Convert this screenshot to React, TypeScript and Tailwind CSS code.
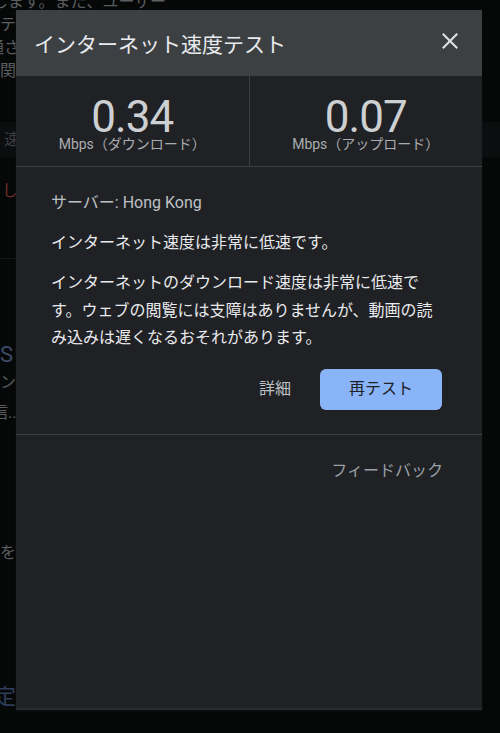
import React from "react";

const F = { fontFamily: "Roboto, 'Noto Sans CJK JP', sans-serif" };

function Background() {
  return (
    <div className="flex flex-col text-[16px] text-[#5b5e61] whitespace-nowrap" style={F}>
      <div className="-mt-[10px] h-[23px] leading-[23px] -ml-[8px] flex items-center">
        <span>します。また、ユーザー</span>
      </div>
      <div className="h-[23px] leading-[23px] ml-0">テスト</div>
      <div className="h-[23px] leading-[23px] -ml-[12px]">通される</div>
      <div className="h-[23px] leading-[23px] ml-0">関する</div>
      <div className="mt-[40px] h-[35px] bg-[#0c0d0e] flex items-center pl-[4px] text-[#3d3f42]">速度</div>
      <div className="mt-[24px] h-[20px] leading-[20px] pl-[2px] text-[#6a2f29]">しっかり</div>
      <div className="mt-[57px] h-px w-[40px] bg-[#161719]"></div>
      <div className="mt-[82px] h-[28px] leading-[28px] text-[22px] text-[#3a4a68]">S</div>
      <div className="mt-[4px] h-[20px] leading-[20px]">ン</div>
      <div className="mt-[10px] h-[20px] leading-[20px] -ml-[8px]">信...</div>
      <div className="mt-[120px] h-[20px] leading-[20px]">を</div>
      <div className="mt-[120px] h-[28px] leading-[28px] text-[22px] -ml-[6px] text-[#2f3e5e]">定</div>
      <div className="mt-[2px] h-[16px] leading-[16px] -ml-[3px] text-[#4a4d50]">.</div>
    </div>
  );
}

function Stat({ value, label, divider }: { value: string; label: string; divider?: boolean }) {
  return (
    <div
      className={
        "flex-1 flex flex-col items-center justify-center " +
        (divider ? "border-r border-[#3c4043]" : "")
      }
    >
      <div
        className="mt-[4px] text-[44px] leading-[44px] tracking-[-1px] text-[#cdd0d3]"
        style={{ fontFamily: "Roboto, sans-serif" }}
      >
        {value}
      </div>
      <div className="-mt-[3px] text-[14px] leading-[16px] text-[#a9acb0]">{label}</div>
    </div>
  );
}

export default function App() {
  return (
    <div className="relative w-[500px] h-[733px] overflow-hidden bg-[#060808]" style={F}>
      <Background />
      <div className="absolute left-[16px] top-[10px] w-[466px] h-[700px] bg-[#202124] flex flex-col border-b-2 border-[#292a2d] shadow-[0_1px_2px_#111214]">
        <div className="h-[66px] bg-[#3c4043] flex items-center justify-between pl-[18px] pr-[24px]">
          <div className="text-[21px] leading-[28px] mt-[3px] text-[#e8eaed]">インターネット速度テスト</div>
          <svg width="16" height="16" viewBox="0 0 16 16" className="-mt-[4px]">
            <path d="M1.5 1.5 L14.5 14.5 M14.5 1.5 L1.5 14.5" stroke="#e0e2e5" strokeWidth="2" strokeLinecap="square" />
          </svg>
        </div>
        <div className="h-[91px] flex border-b border-[#3c4043]">
          <Stat value="0.34" label="Mbps（ダウンロード）" divider />
          <Stat value="0.07" label="Mbps（アップロード）" />
        </div>
        <div className="px-[35px] pt-[24px] flex flex-col">
          <div className="text-[16px] leading-[24px] text-[#bdc1c6]">サーバー: Hong Kong</div>
          <div className="mt-[16px] text-[16px] leading-[24px] text-[#e8eaed]">インターネット速度は非常に低速です。</div>
          <p className="mt-[14px] text-[16px] leading-[27.5px] text-[#e8eaed]">
            インターネットのダウンロード速度は非常に低速です。ウェブの閲覧には支障はありませんが、動画の読み込みは遅くなるおそれがあります。
          </p>
          <div className="mt-[17px] flex items-center justify-end gap-[29px] mr-[5px]">
            <span className="text-[16px] leading-[24px] text-[#bdc1c6]">詳細</span>
            <button className="w-[122px] h-[41px] rounded-[6px] bg-[#8ab4f8] text-[16px] text-[#202124]">
              再テスト
            </button>
          </div>
        </div>
        <div className="mt-[24px] h-px bg-[#3c4043]"></div>
        <div className="mt-[24px] pl-[35px] pr-[39px] flex justify-end">
          <span className="text-[16px] leading-[24px] text-[#9aa0a6]">フィードバック</span>
        </div>
      </div>
    </div>
  );
}
